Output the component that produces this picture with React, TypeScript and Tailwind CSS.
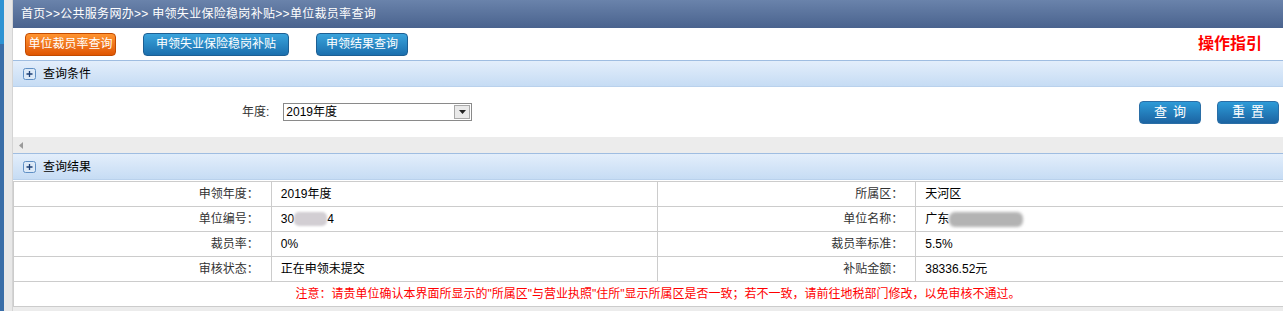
import React from 'react';

const font = { fontFamily: '"Liberation Sans", "Noto Sans CJK SC", sans-serif' };

function PlusBox() {
  return (
    <svg width="13" height="12" viewBox="0 0 13 12" className="flex-none">
      <rect x="0.5" y="0.5" width="12" height="11" rx="2" fill="#dce9f7" stroke="#5f8fc4" />
      <path d="M3.5 6h6M6.5 3v6" stroke="#1d3f74" strokeWidth="1.3" />
    </svg>
  );
}

function SectionHeader({ title }: { title: string }) {
  return (
    <div className="h-[27px] flex items-center gap-[7px] pl-[10px] border-t border-[#9fbde1] border-b border-b-[#b9d1ec] bg-gradient-to-b from-[#e3eefb] to-[#c6dcf4] text-[12px] text-black">
      <PlusBox />
      <span>{title}</span>
    </div>
  );
}

const rows = [
  { l1: '申领年度：', v1: '2019年度', l2: '所属区：', v2: '天河区' },
  { l1: '单位编号：', v1: 'code', l2: '单位名称：', v2: 'name' },
  { l1: '裁员率：', v1: '0%', l2: '裁员率标准：', v2: '5.5%' },
  { l1: '审核状态：', v1: '正在申领未提交', l2: '补贴金额：', v2: '38336.52元' },
];

function Value({ v }: { v: string }) {
  if (v === 'code') {
    return (
      <span className="inline-flex items-center">
        30
        <span className="inline-block w-[33px] h-[14px] bg-[#d2ced3] rounded-[5px] blur-[1px]" />
        4
      </span>
    );
  }
  if (v === 'name') {
    return (
      <span className="inline-flex items-center">
        广东
        <span className="inline-block w-[74px] h-[15px] bg-[#b3b3b3] rounded-[6px] blur-[1.5px]" />
      </span>
    );
  }
  return <span>{v}</span>;
}

export default function App() {
  return (
    <div className="w-[1283px] h-[311px] overflow-hidden flex bg-white" style={font}>
      {/* left frame strip */}
      <div className="w-[13px] flex-none flex">
        <div className="w-[4px] flex flex-col">
          <div className="h-[44px] bg-[#2e93d3]" />
          <div className="flex-1 bg-[#3a6ea8]" />
        </div>
        <div className="flex-1 bg-[#e8e8e8] border-r border-[#d4d4d4]" />
      </div>

      <div className="flex-1 min-w-0 overflow-hidden flex flex-col">
        <div className="h-[28px] flex-none flex items-center pl-[8px] bg-gradient-to-b from-[#6a83ab] to-[#4a638e] text-white text-[12px] tracking-[0.3px]">
          首页&gt;&gt;公共服务网办&gt;&gt; 申领失业保险稳岗补贴&gt;&gt;单位裁员率查询
        </div>

        <div className="h-[32px] flex-none flex items-center pl-[12px] pr-[21px]">
          <button className="w-[91px] h-[23px] rounded-[4px] border border-[#c24a00] bg-gradient-to-b from-[#ff9430] to-[#e05500] text-white text-[12px]">
            单位裁员率查询
          </button>
          <button className="ml-[27px] w-[146px] h-[23px] rounded-[4px] border border-[#1d5f93] bg-gradient-to-b from-[#3aa4dc] to-[#1b6fae] text-white text-[12px]">
            申领失业保险稳岗补贴
          </button>
          <button className="ml-[27px] w-[92px] h-[23px] rounded-[4px] border border-[#1d5f93] bg-gradient-to-b from-[#3aa4dc] to-[#1b6fae] text-white text-[12px]">
            申领结果查询
          </button>
          <span className="ml-auto text-[16px] font-bold text-[#ff0000]">操作指引</span>
        </div>

        <SectionHeader title="查询条件" />

        <div className="h-[50px] flex-none flex items-center pr-[4px] text-[12px]">
          <span className="ml-[229px] text-[#333]">年度:</span>
          <div className="ml-[14px] w-[189px] h-[18px] border border-[#8a8a8a] flex items-center bg-white">
            <span className="flex-1 pl-[2px] text-black">2019年度</span>
            <span className="w-[16px] h-[14px] mr-[1px] border border-[#a8a8a8] bg-[#e9e9e9] flex items-center justify-center">
              <svg width="7" height="4" viewBox="0 0 7 4"><path d="M0 0h7L3.5 4z" fill="#222" /></svg>
            </span>
          </div>
          <button className="ml-auto w-[62px] h-[23px] rounded-[4px] border border-[#2a6ea6] bg-gradient-to-b from-[#2d9bd8] to-[#1c64a2] text-white text-[13px] tracking-[6px] pl-[6px]">
            查询
          </button>
          <button className="ml-[16px] w-[62px] h-[23px] rounded-[4px] border border-[#2a6ea6] bg-gradient-to-b from-[#2d9bd8] to-[#1c64a2] text-white text-[13px] tracking-[6px] pl-[6px]">
            重置
          </button>
        </div>

        <div className="h-[16px] flex-none bg-[#ececec] flex items-center pl-[6px]">
          <svg width="4" height="7" viewBox="0 0 4 7"><path d="M4 0v7L0 3.5z" fill="#9a9a9a" /></svg>
        </div>

        <SectionHeader title="查询结果" />

        <table className="w-[1290px] flex-none border-collapse text-[12px] mt-[1px]">
          <colgroup>
            <col className="w-[258px]" />
            <col className="w-[387px]" />
            <col className="w-[258px]" />
            <col className="w-[387px]" />
          </colgroup>
          <tbody>
            {rows.map((r) => (
              <tr key={r.l1} className="h-[25px]">
                <td className="border border-[#cccccc] text-right pr-[12px] text-[#333]">{r.l1}</td>
                <td className="border border-[#cccccc] pl-[9px] text-black"><Value v={r.v1} /></td>
                <td className="border border-[#cccccc] text-right pr-[12px] text-[#333]">{r.l2}</td>
                <td className="border border-[#cccccc] pl-[9px] text-black"><Value v={r.v2} /></td>
              </tr>
            ))}
            <tr className="h-[25px]">
              <td colSpan={4} className="border border-[#cccccc] text-center text-[#ff0000]">
                注意：请贵单位确认本界面所显示的"所属区"与营业执照"住所"显示所属区是否一致；若不一致，请前往地税部门修改，以免审核不通过。
              </td>
            </tr>
          </tbody>
        </table>
        <div className="flex-1 bg-[#ececec]" />
      </div>
    </div>
  );
}
